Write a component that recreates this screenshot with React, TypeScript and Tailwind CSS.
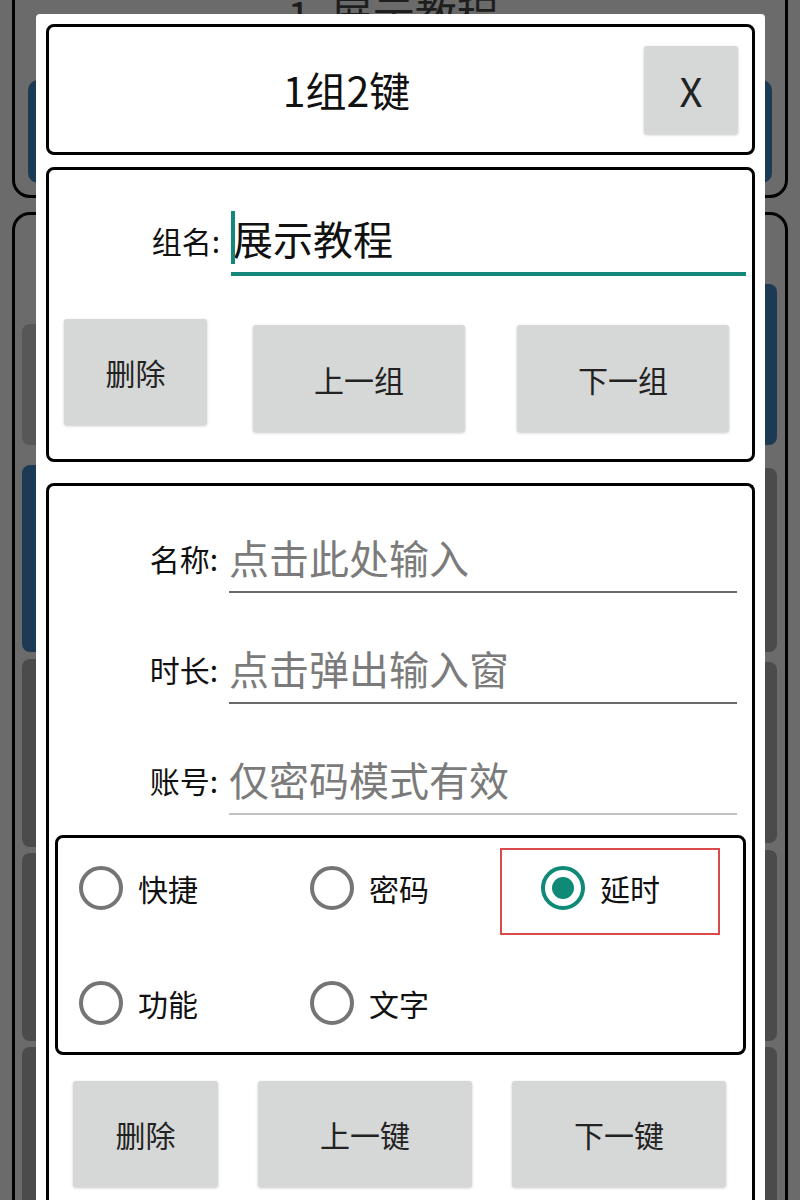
import React from "react";

const LEFT_BLOCKS = [
  "mt-[109px] h-[121px] bg-[#575757]",
  "mt-[20px] h-[187px] bg-[#1d3a55]",
  "mt-[7px] h-[188px] bg-[#4b4b4b]",
  "mt-[6px] h-[188px] bg-[#4b4b4b]",
  "mt-[6px] h-[200px] bg-[#4b4b4b]",
];

const RIGHT_BLOCKS = [
  "mt-[69px] h-[161px] bg-[#1d3a55]",
  "mt-[23px] h-[184px] bg-[#4b4b4b]",
  "mt-[10px] h-[181px] bg-[#4b4b4b]",
  "mt-[7px] h-[191px] bg-[#4b4b4b]",
  "mt-[6px] h-[200px] bg-[#4b4b4b]",
];

function Backdrop() {
  return (
    <div className="-mt-[40px] flex flex-col gap-[14px] px-[12px]">
      <div className="flex h-[238px] flex-col rounded-[18px] border-[3px] border-black px-[13px]">
        <div className="flex h-[72px] items-end justify-center gap-[20px] pr-[14px] text-[42px] leading-none text-[#1e1e1e]">
          <span>1</span>
          <span>展示教程</span>
        </div>
        <div className="mt-[45px] h-[103px] rounded-[10px] bg-[#1d3a55]" />
      </div>
      <div className="flex h-[1100px] gap-[20px] rounded-[18px] border-[3px] border-black pl-[7px] pr-[8px]">
        <div className="flex flex-1 flex-col">
          {LEFT_BLOCKS.map((c, i) => (
            <div key={i} className={`rounded-[8px] ${c}`} />
          ))}
        </div>
        <div className="flex flex-1 flex-col">
          {RIGHT_BLOCKS.map((c, i) => (
            <div key={i} className={`rounded-[8px] ${c}`} />
          ))}
        </div>
      </div>
    </div>
  );
}

function GrayButton({ label, className }: { label: string; className: string }) {
  return (
    <button
      type="button"
      className={`flex shrink-0 items-center justify-center rounded-[3px] bg-[#d6d7d7] text-[30px] leading-none text-[#222] shadow-[0_1px_3px_rgba(0,0,0,0.22)] ${className}`}
    >
      {label}
    </button>
  );
}

function Field({ label, placeholder, line, gap }: { label: string; placeholder: string; line: string; gap: string }) {
  return (
    <div className={`flex items-center ${gap}`}>
      <span className="w-[169px] text-right text-[30px] leading-none text-[#111]">{label}</span>
      <div className={`ml-[11px] flex h-[70px] w-[508px] items-center border-b-2 ${line} text-[40px] leading-none text-[#7b7b7b]`}>
        {placeholder}
      </div>
    </div>
  );
}

function Radio({ label, checked }: { label: string; checked?: boolean }) {
  return (
    <div className="flex w-[231px] shrink-0 items-center">
      {checked ? (
        <span className="flex h-[44px] w-[44px] shrink-0 items-center justify-center rounded-full border-[4px] border-[#0e8a77]">
          <span className="h-[22px] w-[22px] rounded-full bg-[#0e8a77]" />
        </span>
      ) : (
        <span className="h-[44px] w-[44px] shrink-0 rounded-full border-[4px] border-[#757575]" />
      )}
      <span className="ml-[15px] text-[30px] leading-none text-[#111]">{label}</span>
    </div>
  );
}

export default function App() {
  return (
    <div className="relative h-[1200px] w-[800px] overflow-hidden bg-[#6b6b6b] font-['Noto_Sans_CJK_SC','Noto_Sans',sans-serif]">
      <Backdrop />

      <div className="absolute left-[36px] top-[14px] flex h-[1200px] w-[729px] flex-col rounded-[4px] bg-white px-[10px] pt-[10px]">
        {/* header */}
        <div className="flex h-[131px] items-center rounded-[8px] border-[3px] border-black">
          <div className="flex-1 text-center text-[41px] leading-none text-[#111]">1组2键</div>
          <button
            type="button"
            className="mr-[14px] flex h-[88px] w-[94px] items-center justify-center rounded-[3px] bg-[#d6d7d7] text-[40px] leading-none text-[#222] shadow-[0_1px_3px_rgba(0,0,0,0.22)]"
          >
            X
          </button>
        </div>

        {/* group */}
        <div className="mt-[12px] flex h-[295px] flex-col rounded-[8px] border-[3px] border-black">
          <div className="mt-[34px] flex items-center">
            <span className="w-[171px] text-right text-[30px] leading-none text-[#111]">组名:</span>
            <div className="relative ml-[11px] flex h-[72px] w-[515px] items-center border-b-[4px] border-[#15877a] pl-[2px] text-[40px] leading-none text-[#111]">
              <span className="absolute left-0 top-[7px] h-[53px] w-[4px] bg-[#15877a]" />
              展示教程
            </div>
          </div>
          <div className="mt-[43px] flex items-start">
            <GrayButton label="删除" className="ml-[15px] h-[106px] w-[143px]" />
            <GrayButton label="上一组" className="ml-[46px] mt-[6px] h-[107px] w-[212px]" />
            <GrayButton label="下一组" className="ml-[52px] mt-[6px] h-[107px] w-[212px]" />
          </div>
        </div>

        {/* key */}
        <div className="mt-[21px] flex flex-1 flex-col rounded-t-[8px] border-[3px] border-b-0 border-black">
          <Field label="名称:" placeholder="点击此处输入" line="border-[#6a6a6a]" gap="mt-[37px]" />
          <Field label="时长:" placeholder="点击弹出输入窗" line="border-[#6a6a6a]" gap="mt-[41px]" />
          <Field label="账号:" placeholder="仅密码模式有效" line="border-[#c2c2c2]" gap="mt-[41px]" />

          <div className="relative mx-[6px] mt-[20px] flex h-[220px] flex-col gap-[16px] overflow-hidden rounded-[8px] border-[3px] border-black pl-[21px]">
            <div className="flex h-[99px] items-center">
              <Radio label="快捷" />
              <Radio label="密码" />
              <Radio label="延时" checked />
            </div>
            <div className="flex h-[99px] items-center">
              <Radio label="功能" />
              <Radio label="文字" />
            </div>
            <div className="absolute left-[442px] top-[10px] h-[87px] w-[220px] border-2 border-[#d94a4a]" />
          </div>

          <div className="mt-[26px] flex items-start">
            <GrayButton label="删除" className="ml-[24px] h-[106px] w-[145px]" />
            <GrayButton label="上一键" className="ml-[40px] h-[106px] w-[214px]" />
            <GrayButton label="下一键" className="ml-[40px] h-[106px] w-[214px]" />
          </div>
        </div>
      </div>
    </div>
  );
}
